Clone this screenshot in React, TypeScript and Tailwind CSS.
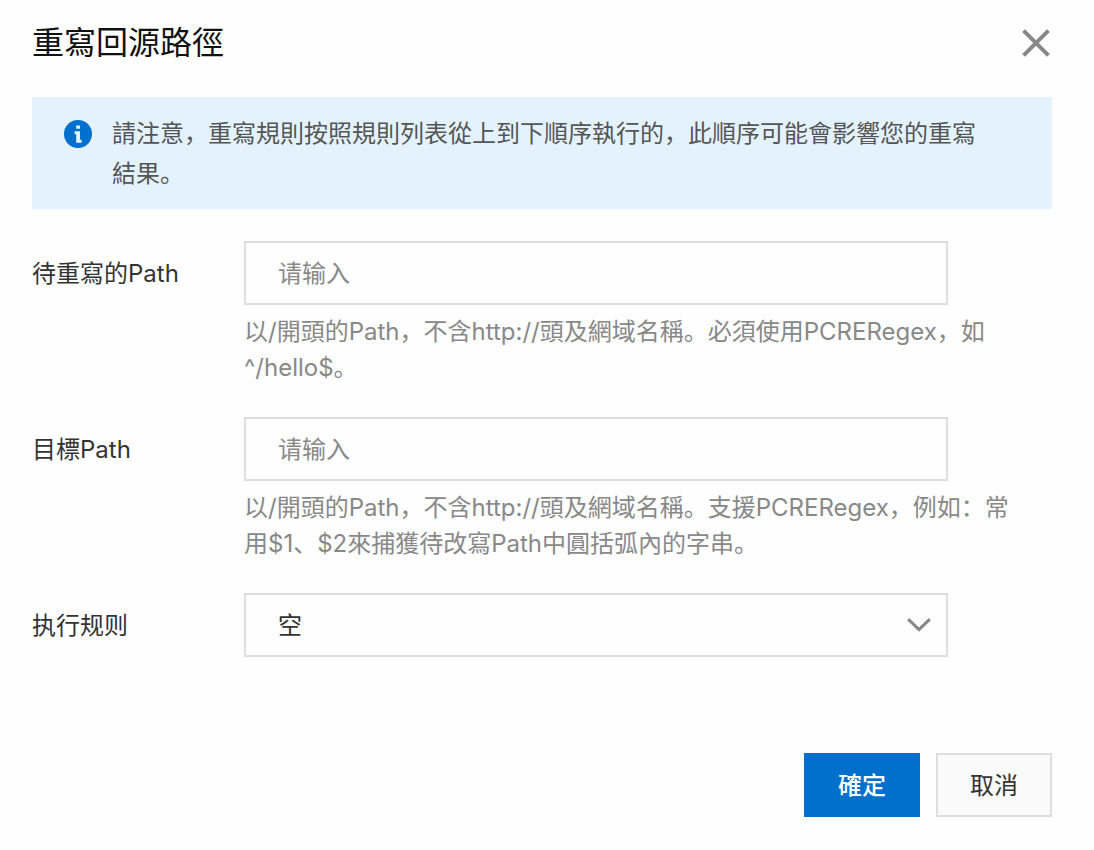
import { useId, useState, type ReactNode } from "react";

const fieldBox =
  "h-16 w-full border-2 border-[#dedede] bg-transparent px-8 text-2xl leading-9 text-[#333] outline-none placeholder:text-[#888] placeholder:opacity-100 focus:border-[#0070cc]";

function CloseIcon() {
  return (
    <svg viewBox="0 0 28 28" className="size-7" fill="none" stroke="#888" strokeWidth="4" aria-hidden="true">
      <path d="M1.6 1.6 26.4 26.4M26.4 1.6 1.6 26.4" />
    </svg>
  );
}

function InfoIcon() {
  return (
    <svg viewBox="0 0 28 28" className="size-7 shrink-0" aria-hidden="true">
      <circle cx="14" cy="14" r="14" fill="#0070cc" />
      <path fill="#e4f2fe" d="M12.2 5.4h3.8v3.4h-3.8zM10.6 11.2H16v8.6h1.7v3h-5.5v-8.6h-1.6z" />
    </svg>
  );
}

function ChevronIcon() {
  return (
    <svg viewBox="0 0 24 14" className="h-3.5 w-6" fill="none" stroke="#888" strokeWidth="3" aria-hidden="true">
      <path d="M1.2 1.2 12 11.6 22.8 1.2" />
    </svg>
  );
}

function Row({ id, label, hint, children }: { id: string; label: string; hint?: ReactNode; children: ReactNode }) {
  return (
    <div className="flex">
      <label htmlFor={id} className="w-[212px] shrink-0 leading-[66px] text-[#333]">
        {label}
      </label>
      <div className="min-w-0 flex-1 pr-8">
        <div className="max-w-[704px]">{children}</div>
        {hint && (
          <p id={`${id}-hint`} className="pt-[9px] leading-9 text-[#888]">
            {hint}
          </p>
        )}
      </div>
    </div>
  );
}

export default function App() {
  const sourceId = useId();
  const targetId = useId();
  const ruleId = useId();
  const [source, setSource] = useState("");
  const [target, setTarget] = useState("");

  return (
    <main
      lang="zh-Hans"
      className="min-h-screen bg-[#fefefe] pr-[42px] pb-8 pl-8 font-[Inter,'Noto_Sans_CJK_SC',sans-serif] text-2xl"
    >
      <header className="flex items-center justify-between pt-[19px] pb-[30px]">
        <h1 className="text-[32px] leading-[48px] text-[#111]">重寫回源路徑</h1>
        <button type="button" aria-label="關閉" className="p-0.5">
          <CloseIcon />
        </button>
      </header>

      <div role="note" className="flex gap-5 bg-[#e4f2fe] pt-[17px] pr-16 pb-[15px] pl-8">
        <span className="flex h-10 items-center">
          <InfoIcon />
        </span>
        <p className="leading-10 text-[#555]">
          請注意，重寫規則按照規則列表從上到下順序執行的，此順序可能會影響您的重寫結果。
        </p>
      </div>

      <form onSubmit={(e) => e.preventDefault()}>
        <div className="flex flex-col gap-[31px] pt-8">
          <Row
            id={sourceId}
            label="待重寫的Path"
            hint={
              <>
                以/開頭的Path，不含http://頭及網域名稱。必須使用PCRERegex，如
                <span className="whitespace-nowrap">^/hello$。</span>
              </>
            }
          >
            <input
              id={sourceId}
              type="text"
              placeholder="请输入"
              aria-describedby={`${sourceId}-hint`}
              value={source}
              onChange={(e) => setSource(e.target.value)}
              className={fieldBox}
            />
          </Row>
          <Row
            id={targetId}
            label="目標Path"
            hint="以/開頭的Path，不含http://頭及網域名稱。支援PCRERegex，例如：常用$1、$2來捕獲待改寫Path中圓括弧內的字串。"
          >
            <input
              id={targetId}
              type="text"
              placeholder="请输入"
              aria-describedby={`${targetId}-hint`}
              value={target}
              onChange={(e) => setTarget(e.target.value)}
              className={fieldBox}
            />
          </Row>
          <Row id={ruleId} label="执行规则">
            <div className="relative">
              <select id={ruleId} className={`${fieldBox} appearance-none pt-0.5`}>
                <option>空</option>
              </select>
              <span className="pointer-events-none absolute inset-y-0 right-[17px] flex items-center">
                <ChevronIcon />
              </span>
            </div>
          </Row>
        </div>

        <div className="flex justify-end gap-4 pt-[94px]">
          <button type="submit" className="h-16 border-2 border-[#0070cc] bg-[#0070cc] px-8 pt-0.5 font-medium text-white">
            確定
          </button>
          <button type="button" className="h-16 border-2 border-[#dedede] bg-[#fafafa] px-8 pt-0.5 text-[#333]">
            取消
          </button>
        </div>
      </form>
    </main>
  );
}
